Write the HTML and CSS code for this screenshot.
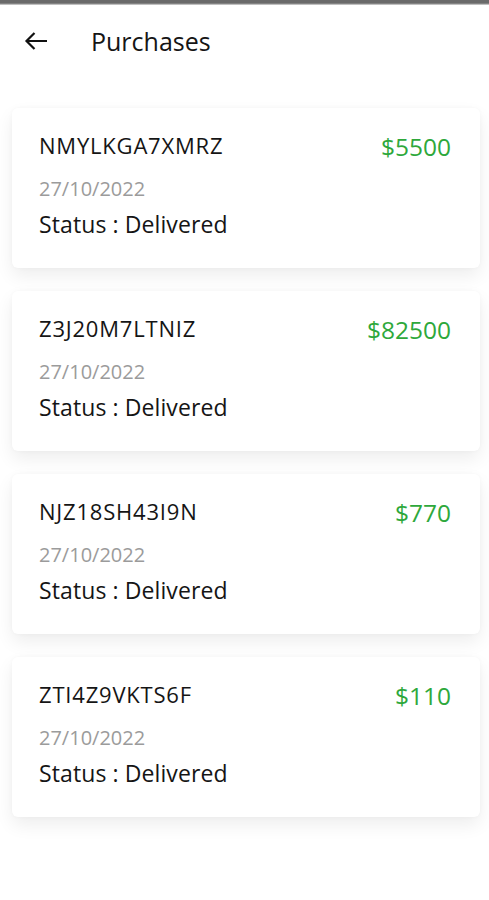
FILE: index.html
```html
<!DOCTYPE html>
<html lang="en">
<head>
<meta charset="utf-8">
<title>Purchases</title>
<link rel="stylesheet" href="styles.css">
</head>
<body>
<div class="statusbar"></div>
<header class="header">
  <svg class="back" width="24" height="20" viewBox="0 0 24 20" aria-hidden="true">
    <path d="M23 10H2.5M10.5 2L2.5 10l8 8" fill="none" stroke="#111" stroke-width="2.2" stroke-linecap="butt" stroke-linejoin="miter"/>
  </svg>
  <h1 class="title">Purchases</h1>
</header>
<main class="list">
  <section class="card">
    <div class="row">
      <span class="code">NMYLKGA7XMRZ</span>
      <span class="price">$5500</span>
    </div>
    <div class="date">27/10/2022</div>
    <div class="status">Status : Delivered</div>
  </section>
  <section class="card">
    <div class="row">
      <span class="code">Z3J20M7LTNIZ</span>
      <span class="price">$82500</span>
    </div>
    <div class="date">27/10/2022</div>
    <div class="status">Status : Delivered</div>
  </section>
  <section class="card">
    <div class="row">
      <span class="code">NJZ18SH43I9N</span>
      <span class="price">$770</span>
    </div>
    <div class="date">27/10/2022</div>
    <div class="status">Status : Delivered</div>
  </section>
  <section class="card">
    <div class="row">
      <span class="code">ZTI4Z9VKTS6F</span>
      <span class="price">$110</span>
    </div>
    <div class="date">27/10/2022</div>
    <div class="status">Status : Delivered</div>
  </section>
</main>
</body>
</html>
```

FILE: styles.css
```css
* { box-sizing: border-box; }

html, body {
  margin: 0;
  padding: 0;
  background: #ffffff;
}

body {
  font-family: "Open Sans", "Noto Sans", "Liberation Sans", sans-serif;
  color: #151515;
  width: 489px;
  height: 900px;
  overflow: hidden;
}

.statusbar {
  height: 5px;
  background: linear-gradient(#6a6a6a 0, #6a6a6a 3px, #9a9a9a 4px, #e4e4e4 5px);
}

.header {
  height: 71px;
  display: flex;
  align-items: center;
  padding-left: 24px;
}

.back {
  display: block;
}

.title {
  margin: 0 0 0 43px;
  font-size: 25px;
  font-weight: 400;
  line-height: 30px;
  color: #151515;
}

.list {
  display: flex;
  flex-direction: column;
  gap: 23px;
  padding: 32px 9px 40px 12px;
}

.card {
  background: #ffffff;
  border-radius: 6px;
  box-shadow: 0 8px 18px rgba(0, 0, 0, 0.07), 0 0 4px rgba(0, 0, 0, 0.03);
  padding: 23px 29px 0 27px;
  height: 160px;
}

.row {
  display: flex;
  justify-content: space-between;
  align-items: flex-start;
}

.code {
  font-size: 22px;
  line-height: 28px;
  letter-spacing: 0.8px;
  color: #151515;
}

.price {
  font-size: 24.5px;
  line-height: 28px;
  margin-top: 2px;
  color: #2ea83b;
}

.date {
  margin-top: 15px;
  font-size: 20px;
  line-height: 26px;
  color: #9b9b9b;
}

.status {
  margin-top: 8px;
  font-size: 23px;
  line-height: 28px;
  letter-spacing: 0.1px;
  color: #151515;
}
```
